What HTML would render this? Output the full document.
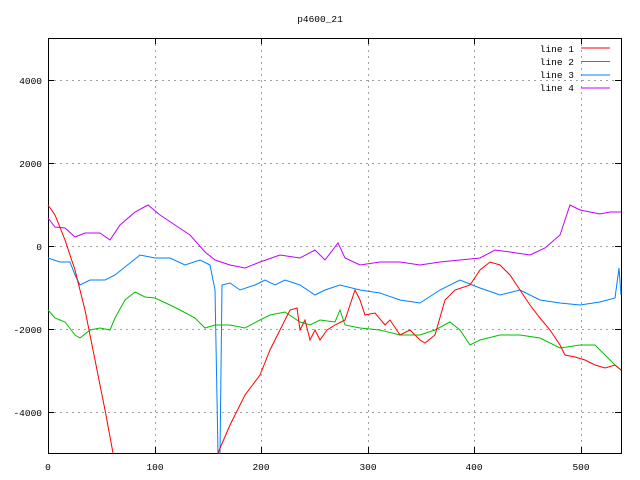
<!DOCTYPE html><html><head><style>body{margin:0;background:#fff}svg{display:block}text{font-family:"Liberation Mono","DejaVu Sans Mono",monospace;font-size:9.5px}</style></head><body>
<svg width="640" height="480" xmlns="http://www.w3.org/2000/svg">
<rect width="640" height="480" fill="#fff"/>
<g stroke="#a0a0a0" stroke-dasharray="2,4" stroke-width="1">
<line x1="48" y1="80.5" x2="621" y2="80.5"/><line x1="48" y1="163.5" x2="621" y2="163.5"/><line x1="48" y1="246.5" x2="621" y2="246.5"/><line x1="48" y1="329.5" x2="621" y2="329.5"/><line x1="48" y1="412.5" x2="621" y2="412.5"/>
<line x1="155.5" y1="38" x2="155.5" y2="453"/><line x1="261.5" y1="38" x2="261.5" y2="453"/><line x1="368.5" y1="38" x2="368.5" y2="453"/><line x1="474.5" y1="38" x2="474.5" y2="453"/><line x1="581.5" y1="38" x2="581.5" y2="453"/>
</g>
<g stroke="#000" stroke-width="1">
<rect x="48.5" y="38.5" width="573" height="415" fill="none"/>
<path d="M48 80.5h6M48 163.5h6M48 246.5h6M48 329.5h6M48 412.5h6M621 80.5h-6M621 163.5h-6M621 246.5h-6M621 329.5h-6M621 412.5h-6M155.5 453v-6M261.5 453v-6M368.5 453v-6M474.5 453v-6M581.5 453v-6M155.5 38v6M261.5 38v6M368.5 38v6M474.5 38v6M581.5 38v6"/>
</g>
<g text-anchor="end"><text x="42" y="84">4000</text><text x="42" y="167">2000</text><text x="42" y="250">0</text><text x="42" y="333">-2000</text><text x="42" y="416">-4000</text></g>
<g text-anchor="middle"><text x="48" y="470">0</text><text x="155" y="470">100</text><text x="261" y="470">200</text><text x="368" y="470">300</text><text x="474" y="470">400</text><text x="581" y="470">500</text><text x="320" y="22">p4600_21</text></g>
<g text-anchor="end"><text x="574" y="52">line 1</text><text x="574" y="65">line 2</text><text x="574" y="78">line 3</text><text x="574" y="91">line 4</text></g>
<path d="M581 48h29" stroke="#f00"/><path d="M581 61.5h29" stroke="#00c000"/><path d="M581 75h29" stroke="#0080ff"/><path d="M581 88h29" stroke="#c000ff"/>
<g fill="none" stroke-width="1">
<polyline stroke="#c000ff" points="48,218 55,227 65,228 75,237 85,233 100,233 110,240 120,225 135,212 148,205 160,215 175,225 190,235 205,252 215,260 230,265 245,268 260,262 280,255 300,258 315,250 325,260 338,243 345,258 360,265 380,262 400,262 420,265 440,262 460,260 480,258 495,250 510,252 530,255 545,248 560,235 570,205 580,210 590,212 600,214 610,212 621,212"/>
<polyline stroke="#0080ff" points="48,258 60,262 70,262 75,275 80,285 90,280 105,280 115,275 130,263 140,255 155,258 170,258 185,265 200,260 210,265 215,290 218,453 220,453 222,285 230,283 240,290 255,285 265,280 275,285 285,280 300,285 315,295 325,290 340,285 360,290 380,293 400,300 420,303 440,290 460,280 480,288 500,295 520,290 540,300 560,303 580,305 600,302 615,298 619,268 621,295"/>
<polyline stroke="#00c000" points="48,310 55,318 65,322 75,335 80,338 90,330 100,328 110,330 115,318 125,300 135,292 145,297 155,298 170,305 180,310 195,318 205,328 215,325 230,325 245,328 260,320 270,315 285,312 300,322 310,325 320,320 335,322 340,310 345,325 360,328 380,330 400,335 420,335 435,330 450,322 460,330 470,345 480,340 500,335 520,335 540,338 560,348 580,345 595,345 605,355 615,365 621,370"/>
<polyline stroke="#f00" points="48,205 55,215 65,240 75,270 85,310 95,360 105,410 113,453"/>
<polyline stroke="#f00" points="218,453 230,425 245,395 260,375 270,350 280,330 290,310 297,308 300,330 305,320 310,340 315,330 320,340 327,330 335,325 345,320 355,290 360,300 365,315 375,313 385,325 390,320 400,335 410,330 420,340 425,343 435,335 445,300 455,290 470,285 480,270 490,262 500,265 510,275 520,290 530,305 540,318 550,330 560,345 565,355 575,357 585,360 595,365 605,368 615,365 621,370"/>
</g>
</svg></body></html>
